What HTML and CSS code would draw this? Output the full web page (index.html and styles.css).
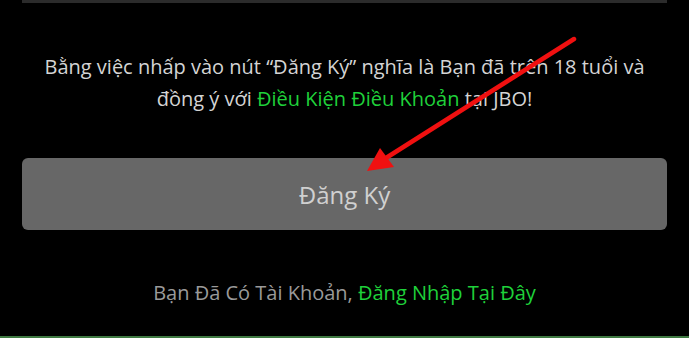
FILE: index.html
```html
<!DOCTYPE html>
<html lang="vi">
<head>
<meta charset="utf-8">
<link rel="stylesheet" href="styles.css">
</head>
<body>
<div class="page">
  <div class="topbar"></div>
  <p class="terms">Bằng việc nhấp vào nút “Đăng Ký” nghĩa là Bạn đã trên 18 tuổi và<br>đồng ý với <a class="green">Điều Kiện Điều Khoản</a> tại JBO!</p>
  <button class="submit">Đăng Ký</button>
  <p class="login">Bạn Đã Có Tài Khoản, <a class="green">Đăng Nhập Tại Đây</a></p>
</div>
<div class="bottomline"></div>
<svg class="arrow" width="689" height="338" viewBox="0 0 689 338">
  <line x1="574" y1="39" x2="386" y2="158" stroke="#f01010" stroke-width="4.5" stroke-linecap="round"/>
  <polygon points="367,171 380,148 394,167" fill="#f01010"/>
</svg>
</body>
</html>
```
FILE: styles.css
```css
html, body {
  margin: 0;
  padding: 0;
  background: #000;
  height: 338px;
  overflow: hidden;
}
body {
  position: relative;
  font-family: "Open Sans", "Noto Sans", sans-serif;
}
.page {
  padding: 0 22px;
  display: flex;
  flex-direction: column;
}
.topbar {
  height: 3px;
  background: #2b2b2b;
}
.terms {
  margin: 48px 0 0;
  text-align: center;
  color: #d4d4d4;
  font-size: 20px;
  line-height: 32px;
}
.green {
  color: #1fd13a;
}
.submit {
  margin-top: 43px;
  height: 72px;
  border: none;
  border-radius: 6px;
  background: #676767;
  color: #d0d0d0;
  font-family: inherit;
  font-size: 24px;
}
.login {
  margin: 51px 0 0;
  text-align: center;
  color: #9a9a9a;
  font-size: 20px;
  line-height: 24px;
}
.bottomline {
  position: absolute;
  left: 0;
  right: 0;
  bottom: 0;
  height: 2px;
  background: #3f7a42;
}
.arrow {
  position: absolute;
  left: 0;
  top: 0;
  pointer-events: none;
}
```
